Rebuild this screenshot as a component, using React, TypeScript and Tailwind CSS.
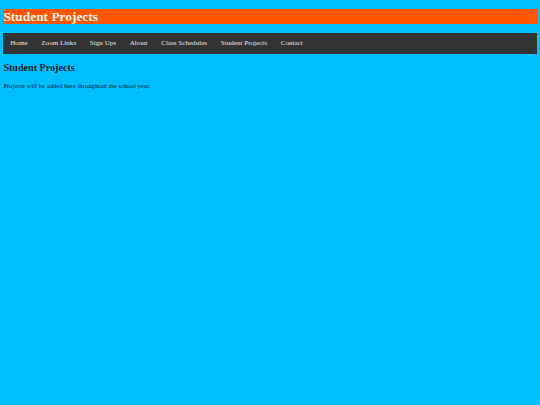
import React from 'react';

const links = ['Home', 'Zoom Links', 'Sign Ups', 'About', 'Class Schedules', 'Student Projects', 'Contact'];

export default function App() {
  return (
    <div className="min-h-[405px] bg-[#00bfff] px-[3.4px] pt-[9px] font-['Liberation_Serif',serif] flow-root">
      {/* Header */}
      <h1 className="bg-[#ff5500] text-[13.4px] leading-[15px] font-bold text-[#fff8ec]">
        Student Projects
      </h1>

      {/* Nav bar */}
      <ul className="mt-[9px] flex bg-[#333333]">
        {links.map((l) => (
          <li key={l}>
            <a className="block px-[6.85px] py-[6.3px] text-[7.1px] leading-[8.5px] text-[#e8e8e8]">{l}</a>
          </li>
        ))}
      </ul>

      <h2 className="mt-[8.4px] text-[10.1px] leading-[11.6px] font-bold text-[#061a2b]">Student Projects</h2>
      <p className="mt-[8.4px] text-[6.7px] leading-[7.7px] text-[#0a2540]">
        Projects will be added here throughout the school year.
      </p>
    </div>
  );
}
